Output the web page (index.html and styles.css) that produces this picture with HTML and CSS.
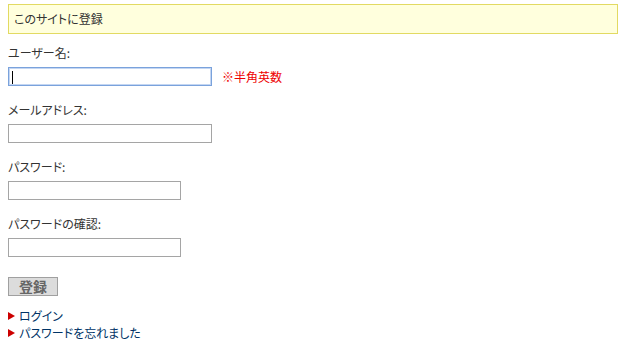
FILE: index.html
```html
<!DOCTYPE html>
<html>
<head>
<meta charset="utf-8">
<title>このサイトに登録</title>
<link rel="stylesheet" href="styles.css">
</head>
<body>
<div class="notice">このサイトに登録</div>
<form class="register">
 <div class="field">
  <label>ユーザー名:</label>
  <div class="row"><input type="text" class="wide focus"><span class="hint">※半角英数</span></div>
 </div>
 <div class="field">
  <label>メールアドレス:</label>
  <div class="row"><input type="text" class="wide"></div>
 </div>
 <div class="field">
  <label>パスワード:</label>
  <div class="row"><input type="password" class="narrow"></div>
 </div>
 <div class="field">
  <label>パスワードの確認:</label>
  <div class="row"><input type="password" class="narrow"></div>
 </div>
 <div class="submit"><button type="button">登録</button></div>
</form>
<ul class="links">
 <li><a href="#">ログイン</a></li>
 <li><a href="#">パスワードを忘れました</a></li>
</ul>
</body>
</html>
```

FILE: styles.css
```css
body { margin: 0; padding: 4px 6px 0 8px; font-family: "Noto Sans CJK JP", "DejaVu Sans", sans-serif; font-size: 12px;
       font-feature-settings: "palt"; color: #333333; background: #ffffff; }

.notice { height: 28px; line-height: 28px; padding-left: 5px; background-color: #ffffdd; border: 1px solid #e2da62; }

.register { margin: 11px 0 0 0; }
.field { margin-bottom: 16px; }
.field label { display: block; height: 16px; line-height: 16px; }
.row { display: flex; align-items: center; margin-top: 6px; }

input { box-sizing: border-box; height: 19px; margin: 0; padding: 0 2px; border: 1px solid #a5a5a5; font: inherit; background: #ffffff; outline: none; }
input.wide { width: 204px; }
input.narrow { width: 173px; }
input.focus { border-color: #7aa2dc; box-shadow: 0 0 0 1px #c4d6f2 inset;
      background: #ffffff linear-gradient(#000000, #000000) no-repeat 3px 3px / 1px 13px; }

.hint { margin-left: 10px; color: #ee0000; }

.submit { margin-top: 20px; }
button { box-sizing: border-box; width: 50px; height: 19px; margin: 0; padding: 0; border: 1px solid #a0a0a0; background: #dcdcdc;
      font-family: inherit; font-size: 14px; font-weight: bold; line-height: 17px; color: #666666; }

.links { list-style: none; margin: 11px 0 0 0; padding: 0; }
.links li { height: 17px; line-height: 17px; display: flex; align-items: center; }
.links li::before { content: ""; width: 0; height: 0; margin-right: 4px; border-style: solid; border-width: 4px 0 4px 7px; border-color: transparent transparent transparent #cc0000; }
.links a { color: #003366; text-decoration: none; }
```
